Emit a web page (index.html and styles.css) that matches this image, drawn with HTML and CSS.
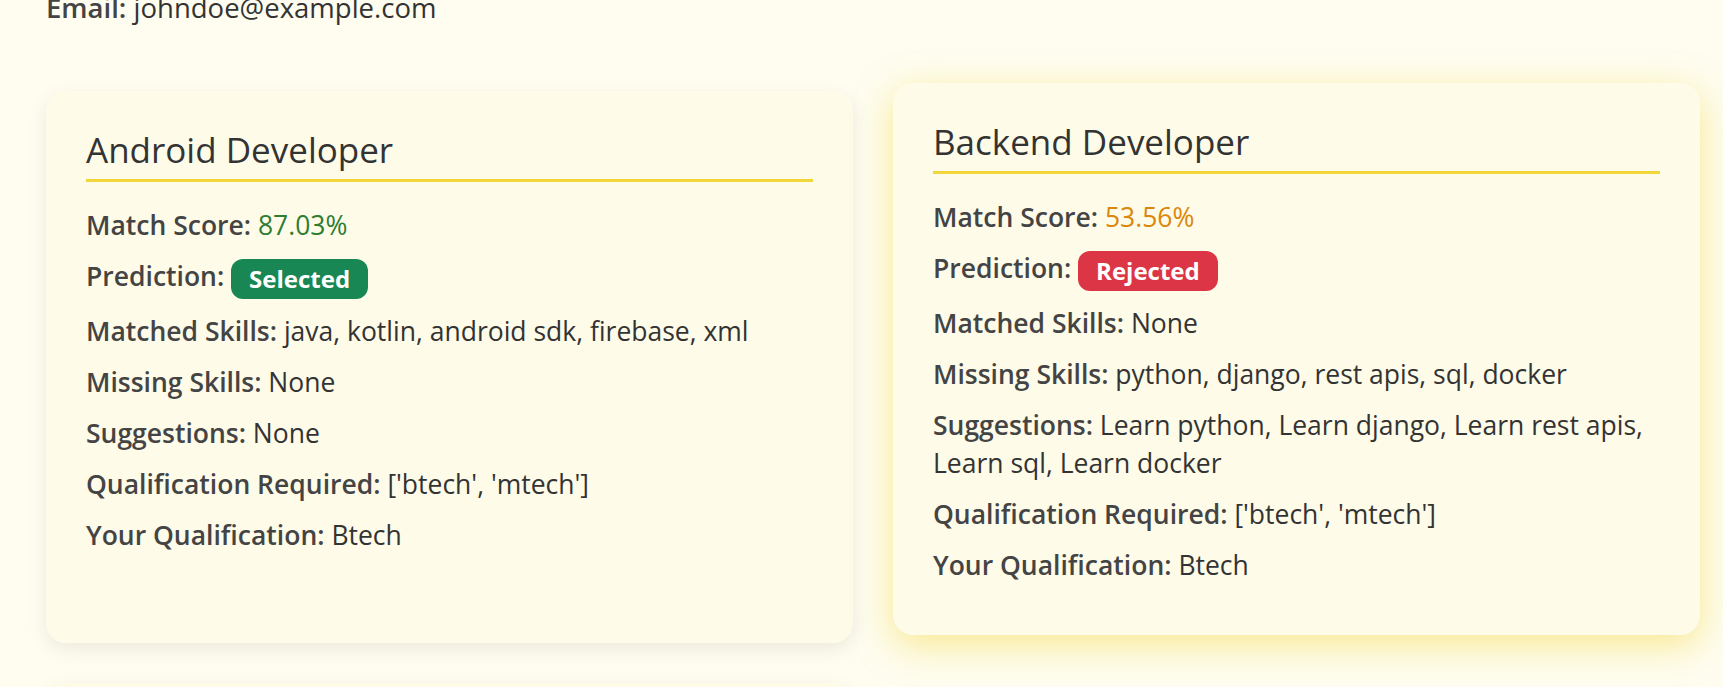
FILE: index.html
```html
<!DOCTYPE html>
<html lang="en">
<head>
<meta charset="utf-8">
<title>Job Match Results</title>
<link rel="stylesheet" href="styles.css">
</head>
<body>
<main class="page">
  <section class="profile">
    <p class="row row--email"><span class="label">Email:</span> johndoe@example.com</p>
  </section>

  <section class="results">
    <article class="card">
      <h2 class="card-title">Android Developer</h2>
      <p class="row"><span class="label">Match Score:</span> <span class="score score--high">87.03%</span></p>
      <p class="row"><span class="label">Prediction:</span> <span class="badge badge--selected">Selected</span></p>
      <p class="row"><span class="label">Matched Skills:</span> java, kotlin, android sdk, firebase, xml</p>
      <p class="row"><span class="label">Missing Skills:</span> None</p>
      <p class="row"><span class="label">Suggestions:</span> None</p>
      <p class="row"><span class="label">Qualification Required:</span> ['btech', 'mtech']</p>
      <p class="row"><span class="label">Your Qualification:</span> Btech</p>
    </article>

    <article class="card card--active">
      <h2 class="card-title">Backend Developer</h2>
      <p class="row"><span class="label">Match Score:</span> <span class="score score--mid">53.56%</span></p>
      <p class="row"><span class="label">Prediction:</span> <span class="badge badge--rejected">Rejected</span></p>
      <p class="row"><span class="label">Matched Skills:</span> None</p>
      <p class="row"><span class="label">Missing Skills:</span> python, django, rest apis, sql, docker</p>
      <p class="row"><span class="label">Suggestions:</span> Learn python, Learn django, Learn rest apis, Learn sql, Learn docker</p>
      <p class="row"><span class="label">Qualification Required:</span> ['btech', 'mtech']</p>
      <p class="row"><span class="label">Your Qualification:</span> Btech</p>
    </article>

    <article class="card">
      <h2 class="card-title">Frontend Developer</h2>
      <p class="row"><span class="label">Match Score:</span> <span class="score score--mid">61.20%</span></p>
    </article>
  </section>
</main>
</body>
</html>
```

FILE: styles.css
```css
html {
  overflow: hidden;
}

body {
  margin: 0;
  background: #fefdf0;
  color: #333333;
  font-family: "Open Sans", "Noto Sans", "Liberation Sans", sans-serif;
}

.page {
  padding: 0 23px 40px 46px;
}

.profile {
  margin-top: -11px;
}

.row {
  margin: 0 0 13px;
  font-size: 26.5px;
  line-height: 38px;
  color: #333333;
}

.profile .row {
  margin: 0;
}

.row--email {
  font-size: 27.5px;
}

.label {
  font-weight: 600;
  color: #444444;
}

.results {
  margin-top: 64px;
  display: grid;
  grid-template-columns: repeat(2, 1fr);
  gap: 40px;
}

.card {
  background: #fefbe9;
  border-radius: 20px;
  padding: 40px 40px 38px;
  box-shadow: 0 6px 20px rgba(0, 0, 0, 0.08);
  transition: transform 0.2s ease, box-shadow 0.2s ease;
}

.card--active,
.card:hover {
  transform: translateY(-8px);
  box-shadow: 0 10px 36px rgba(245, 214, 50, 0.5);
}

.card-title {
  margin: 0 0 24px;
  padding-bottom: 10px;
  border-bottom: 3px solid #f2d63a;
  font-size: 35px;
  line-height: 38px;
  font-weight: 400;
  color: #333333;
}

.score--high {
  color: #2e7d32;
}

.score--mid {
  color: #da870a;
}

.badge {
  display: inline-block;
  padding: 1px 18px;
  border-radius: 12px;
  font-size: 24px;
  line-height: 38px;
  font-weight: 700;
  color: #ffffff;
  vertical-align: middle;
}

.badge--selected {
  background: #198754;
}

.badge--rejected {
  background: #dc3545;
}
```
